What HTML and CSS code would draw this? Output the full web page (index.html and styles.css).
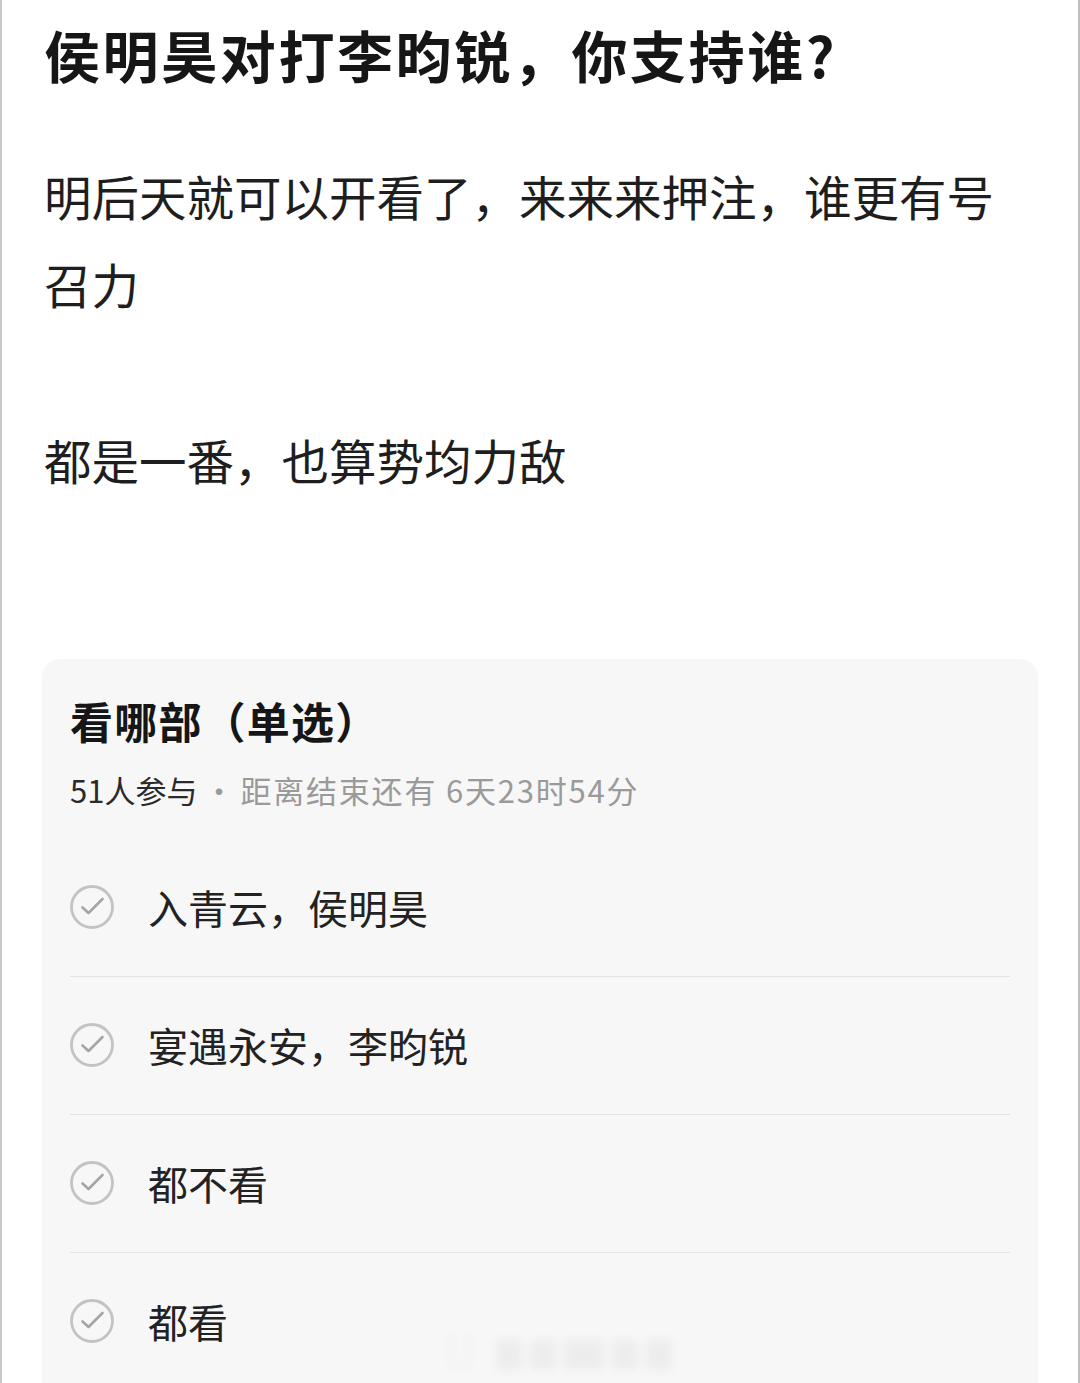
FILE: index.html
```
<!DOCTYPE html>
<html lang="zh-CN">
<head>
<meta charset="utf-8">
<link rel="stylesheet" href="styles.css">
</head>
<body>
<div class="page">
  <h1 class="title">侯明昊对打李昀锐，你支持谁?</h1>
  <p class="content">明后天就可以开看了，来来来押注，谁更有号召力<br><br>都是一番，也算势均力敌</p>
  <section class="poll">
    <h2 class="poll-title">看哪部（单选）</h2>
    <div class="poll-meta"><span class="count">51人参与</span><span class="dot">·</span><span class="remain">距离结束还有 6天23时54分</span></div>
    <ul class="options">
      <li class="option"><svg class="check" viewBox="0 0 44 44"><circle cx="22" cy="22" r="20.5"/><path class="tick" d="M12.5 22.5 L18.5 28 L32.5 14"/></svg><span>入青云，侯明昊</span></li>
      <li class="option"><svg class="check" viewBox="0 0 44 44"><circle cx="22" cy="22" r="20.5"/><path class="tick" d="M12.5 22.5 L18.5 28 L32.5 14"/></svg><span>宴遇永安，李昀锐</span></li>
      <li class="option"><svg class="check" viewBox="0 0 44 44"><circle cx="22" cy="22" r="20.5"/><path class="tick" d="M12.5 22.5 L18.5 28 L32.5 14"/></svg><span>都不看</span></li>
      <li class="option"><svg class="check" viewBox="0 0 44 44"><circle cx="22" cy="22" r="20.5"/><path class="tick" d="M12.5 22.5 L18.5 28 L32.5 14"/></svg><span>都看</span></li>
    </ul>
  </section>
  <div class="watermark" aria-hidden="true"><span class="wm-cup"></span><span class="wm-bar"></span><span class="wm-bar"></span><span class="wm-bar wide"></span><span class="wm-bar"></span><span class="wm-bar"></span></div>
</div>
</body>
</html>
```

FILE: styles.css
```
* { box-sizing: border-box; }
html, body { margin: 0; padding: 0; background: #fff; }
body {
  font-family: "Noto Sans CJK SC", "Noto Sans", sans-serif;
  color: #1c1c1c;
  width: 1080px;
  height: 1383px;
  overflow: hidden;
}
.page {
  position: relative;
  width: 1080px;
  height: 1383px;
  border-left: 2px solid #c9c9c9;
  border-right: 2px solid #bdbdbd;
  padding: 18px 0 0 42px;
  overflow: hidden;
}
.title {
  margin: 0;
  font-size: 56px;
  line-height: 72px;
  font-weight: 700;
  color: #161616;
  letter-spacing: 2.6px;
}
.content {
  margin: 62px 0 0 0;
  width: 990px;
  font-size: 47.5px;
  line-height: 88px;
  font-weight: 400;
  color: #1e1e1e;
}
.poll {
  margin-top: 155px;
  margin-left: -2px;
  width: 996px;
  height: 760px;
  background: #f7f7f7;
  border-radius: 18px;
  padding: 32px 28px 0 28px;
}
.poll-title {
  margin: 0;
  font-size: 43px;
  line-height: 58px;
  font-weight: 700;
  color: #161616;
  letter-spacing: 1.2px;
}
.poll-meta {
  margin-top: 20px;
  font-size: 31px;
  line-height: 42px;
  color: #9a9a9a;
}
.poll-meta .count { color: #2a2a2a; }
.poll-meta .dot { margin: 0 6px; }
.poll-meta .remain { letter-spacing: 1.8px; }
.options {
  list-style: none;
  margin: 28px 0 0 0;
  padding: 0;
}
.option {
  height: 138px;
  border-bottom: 1px solid #e3e3e3;
  display: flex;
  align-items: center;
  gap: 34px;
  font-size: 40px;
  color: #222;
  padding-bottom: 1px;
}
.check {
  width: 44px;
  height: 44px;
  flex: none;
  fill: none;
  stroke: #c3c3c3;
  stroke-width: 2.8;
  stroke-linecap: round;
  stroke-linejoin: round;
}
.check .tick { stroke: #a5a5a5; stroke-width: 2.6; }
.watermark {
  position: absolute;
  left: 448px;
  top: 1334px;
  display: flex;
  gap: 8px;
  align-items: flex-end;
  filter: blur(4px);
  opacity: 0.3;
}
.wm-cup {
  width: 20px;
  height: 36px;
  border: 3px solid #d8d8d8;
  border-top: none;
  border-radius: 0 0 10px 10px;
  margin-right: 18px;
}
.wm-bar {
  width: 26px;
  height: 30px;
  background: #d6d6d6;
}
.wm-bar.wide { width: 40px; }
```
